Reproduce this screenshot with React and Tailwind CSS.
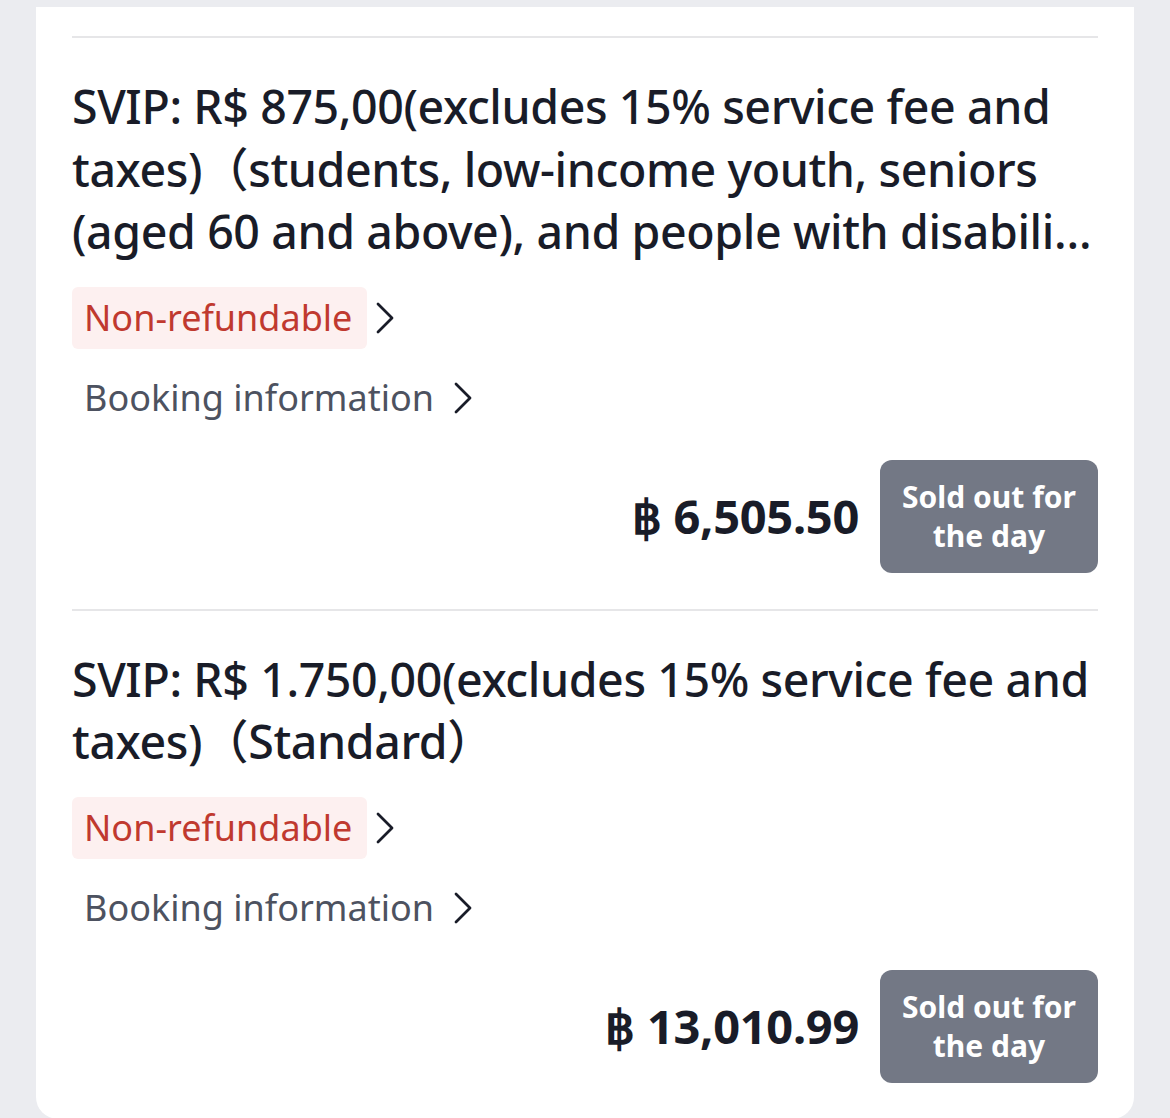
import React from "react";

const Chevron = ({ className }) => (
  <svg viewBox="0 0 18 32" className={className} fill="none" stroke="currentColor" strokeWidth="2.8" strokeLinecap="round" strokeLinejoin="round">
    <polyline points="2,2 16,16 2,30" />
  </svg>
);

const TicketRow = ({ lines, last, price }) => {
  return (
    <div className="pt-[37px] pb-[36px]">
      {/* Title: wraps freely, last line is cut with an ellipsis */}
      <h2 className="text-[46.5px] leading-[62.5px] text-[#191c28] font-medium tracking-[-0.4px]">
        <span className="block">{lines}</span>
        {last && <span className="block truncate">{last}</span>}
      </h2>

      {/* Refund tag */}
      <div className="mt-[24px] flex items-center">
        <span className="bg-[#fdf0f0] text-[#c0392f] text-[36px] leading-[62px] pl-[12px] pr-[15px] rounded-[6px]">
          Non-refundable
        </span>
        <Chevron className="w-[18px] h-[32px] ml-[9px] text-[#191c28]" />
      </div>

      {/* Booking info */}
      <div className="mt-[27px] flex items-center pl-[12px]">
        <span className="text-[36px] leading-[44px] text-[#4d5260]">Booking information</span>
        <Chevron className="w-[18px] h-[32px] ml-[20px] text-[#191c28]" />
      </div>

      {/* Price + action */}
      <div className="mt-[40px] flex items-center justify-end gap-[21px]">
        <span className="text-[47px] font-bold text-[#191c28] tracking-[-0.3px]">฿ {price}</span>
        <button className="w-[218px] h-[113px] rounded-[12px] bg-[#737885] text-white text-[30px] leading-[39px] font-bold">
          Sold out for
          <br />
          the day
        </button>
      </div>
    </div>
  );
};

export default function App() {
  return (
    <div
      className="min-h-screen bg-[#ebecf0] pt-[7px] px-[36px] overflow-hidden"
      style={{ fontFamily: '"Noto Sans", "Noto Sans CJK SC", sans-serif' }}
    >
      <div className="bg-white rounded-b-[22px] px-[36px] pt-[29px]">
        <div className="h-[2px] bg-[#e6e6e8]" />
        <TicketRow
          lines="SVIP: R$ 875,00(excludes 15% service fee and taxes)（students, low-income youth, seniors"
          last="(aged 60 and above), and people with disabilities）"
          price="6,505.50"
        />
        <div className="h-[2px] bg-[#e6e6e8]" />
        <TicketRow
          lines="SVIP: R$ 1.750,00(excludes 15% service fee and taxes)（Standard）"
          price="13,010.99"
        />
      </div>
    </div>
  );
}
